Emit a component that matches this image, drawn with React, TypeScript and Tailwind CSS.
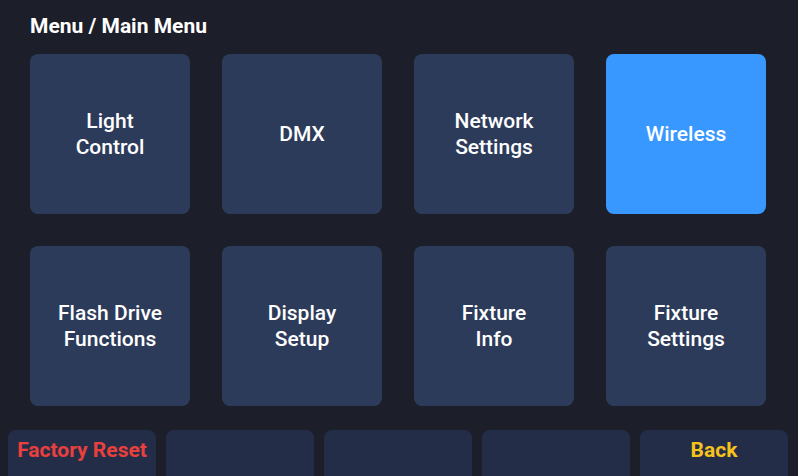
const tiles = [
  { label: ['Light', 'Control'] },
  { label: ['DMX'] },
  { label: ['Network', 'Settings'] },
  { label: ['Wireless'], active: true },
  { label: ['Flash Drive', 'Functions'] },
  { label: ['Display', 'Setup'] },
  { label: ['Fixture', 'Info'] },
  { label: ['Fixture', 'Settings'] },
]

const softKeys = [
  { label: 'Factory Reset', color: 'text-[#e8403c]' },
  { label: '', color: '' },
  { label: '', color: '' },
  { label: '', color: '' },
  { label: 'Back', color: 'text-[#f6c21c]' },
]

export default function App() {
  return (
    <div
      className="h-[476px] w-[798px] overflow-hidden bg-[#1c1e29] text-white"
      style={{ fontFamily: 'Roboto, "Liberation Sans", sans-serif' }}
    >
      <h1 className="px-[30px] pt-[14px] text-[21px] font-bold leading-[24px]">
        Menu / Main Menu
      </h1>

      <div className="mt-4 grid grid-cols-[repeat(4,160px)] gap-8 px-[30px]">
        {tiles.map((tile) => (
          <button
            key={tile.label.join(' ')}
            className={`flex h-[160px] flex-col items-center justify-center rounded-lg text-[21px] font-medium leading-[26px] ${
              tile.active ? 'bg-[#3898ff]' : 'bg-[#2d3b5b]'
            }`}
          >
            {tile.label.map((line) => (
              <span key={line}>{line}</span>
            ))}
          </button>
        ))}
      </div>

      <div className="mt-6 flex gap-[10px] pl-2 pr-[10px]">
        {softKeys.map((key, i) => (
          <div
            key={i}
            className={`h-[60px] flex-1 rounded-lg bg-[#242d48] pt-2 text-center text-[21px] font-bold leading-[24px] ${key.color}`}
          >
            {key.label}
          </div>
        ))}
      </div>
    </div>
  )
}
